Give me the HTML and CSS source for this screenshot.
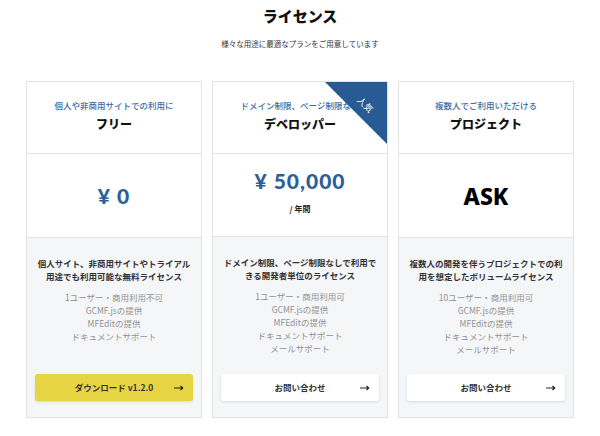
FILE: index.html
```html
<!DOCTYPE html>
<html lang="ja">
<head>
    <meta charset="UTF-8">
    <meta name="viewport" content="width=device-width, initial-scale=1.0">
    <title>ライセンス</title>
    <link rel="stylesheet" href="styles.css">
</head>
<body>

<section class="license">
    <h1>ライセンス</h1>
    <p class="lead">様々な用途に最適なプランをご用意しています</p>

    <div class="plans">
        <!-- フリー -->
        <div class="plan">
            <div class="plan-head">
                <p class="plan-target">個人や非商用サイトでの利用に</p>
                <p class="plan-name">フリー</p>
            </div>
            <div class="plan-price">
                <p class="price">¥ 0</p>
            </div>
            <div class="plan-body">
                <p class="plan-desc">個人サイト、非商用サイトやトライアル用途でも利用可能な無料ライセンス</p>
                <ul class="features">
                    <li>1ユーザー・商用利用不可</li>
                    <li>GCMF.jsの提供</li>
                    <li>MFEditの提供</li>
                    <li>ドキュメントサポート</li>
                </ul>
                <a class="btn btn-download" href="#">ダウンロード v1.2.0
                    <svg class="arrow" width="10" height="6" viewBox="0 0 10 6"><path d="M0 3h8.5M6.5 1l2.2 2-2.2 2" fill="none" stroke="currentColor" stroke-width="1.2"/></svg>
                </a>
            </div>
        </div>

        <!-- デベロッパー -->
        <div class="plan">
            <div class="ribbon"><span>人気</span></div>
            <div class="plan-head">
                <p class="plan-target">ドメイン制限、ページ制限なし</p>
                <p class="plan-name">デベロッパー</p>
            </div>
            <div class="plan-price price--yearly">
                <p class="price">¥ 50,000</p>
                <p class="price-unit">/ 年間</p>
            </div>
            <div class="plan-body">
                <p class="plan-desc">ドメイン制限、ページ制限なしで利用できる開発者単位のライセンス</p>
                <ul class="features">
                    <li>1ユーザー・商用利用可</li>
                    <li>GCMF.jsの提供</li>
                    <li>MFEditの提供</li>
                    <li>ドキュメントサポート</li>
                    <li>メールサポート</li>
                </ul>
                <a class="btn" href="#">お問い合わせ
                    <svg class="arrow" width="10" height="6" viewBox="0 0 10 6"><path d="M0 3h8.5M6.5 1l2.2 2-2.2 2" fill="none" stroke="currentColor" stroke-width="1.2"/></svg>
                </a>
            </div>
        </div>

        <!-- プロジェクト -->
        <div class="plan">
            <div class="plan-head">
                <p class="plan-target">複数人でご利用いただける</p>
                <p class="plan-name">プロジェクト</p>
            </div>
            <div class="plan-price">
                <p class="price price-ask">ASK</p>
            </div>
            <div class="plan-body">
                <p class="plan-desc">複数人の開発を伴うプロジェクトでの利用を想定したボリュームライセンス</p>
                <ul class="features">
                    <li>10ユーザー・商用利用可</li>
                    <li>GCMF.jsの提供</li>
                    <li>MFEditの提供</li>
                    <li>ドキュメントサポート</li>
                    <li>メールサポート</li>
                </ul>
                <a class="btn" href="#">お問い合わせ
                    <svg class="arrow" width="10" height="6" viewBox="0 0 10 6"><path d="M0 3h8.5M6.5 1l2.2 2-2.2 2" fill="none" stroke="currentColor" stroke-width="1.2"/></svg>
                </a>
            </div>
        </div>
    </div>
</section>

</body>
</html>
```

FILE: styles.css
```css
body {
    margin: 0;
    background-color: #fff;
    font-family: "Noto Sans CJK JP", "Noto Sans", sans-serif;
    color: #222;
}
p {
    margin: 0;
}
.license {
    padding-top: 6px;
    text-align: center;
}
h1 {
    margin: 0;
    font-size: 15px;
    line-height: 20px;
    font-weight: 900;
    color: #111;
}
.lead {
    margin-top: 12px;
    font-size: 7.5px;
    line-height: 12px;
    color: #333;
}
.plans {
    display: grid;
    grid-template-columns: repeat(3, 176px);
    gap: 10px;
    justify-content: center;
    margin-top: 31px;
}
.plan {
    position: relative;
    overflow: hidden;
    display: flex;
    flex-direction: column;
    border: 1px solid #e3e3e3;
    background: #f5f6f8;
}
.plan-head {
    padding: 16px 0 20px;
    background: #fff;
    border-bottom: 1px solid #e3e3e3;
    white-space: nowrap;
}
.plan-target {
    font-size: 8.5px;
    line-height: 14px;
    font-weight: 500;
    color: #3a6ba3;
}
.plan-name {
    margin-top: 3px;
    font-size: 12px;
    line-height: 18px;
    font-weight: 900;
    color: #111;
}
.plan-price {
    height: 83px;
    display: flex;
    flex-direction: column;
    justify-content: center;
    align-items: center;
    background: #fff;
    border-bottom: 1px solid #e3e3e3;
}
.price--yearly {
    box-sizing: border-box;
    padding-bottom: 8px;
}
.price {
    font-family: Lato, "Noto Sans", sans-serif;
    font-size: 21px;
    line-height: 26px;
    font-weight: 900;
    letter-spacing: 1px;
    color: #2b5f96;
}
.price-ask {
    font-family: "Noto Sans", sans-serif;
    font-size: 23px;
    font-weight: 800;
    letter-spacing: 0;
    color: #000;
}
.price-unit {
    margin-top: 9px;
    font-size: 8px;
    line-height: 12px;
    font-weight: 700;
    color: #222;
}
.plan-body {
    flex: 1;
    display: flex;
    flex-direction: column;
    padding: 19px 8px 16px;
}
.plan-desc {
    font-size: 8.5px;
    line-height: 12.6px;
    font-weight: 700;
    color: #333;
}
.features {
    list-style: none;
    margin: 9px 0 18px;
    padding: 0;
    font-size: 8.5px;
    line-height: 13px;
    color: #929292;
}
.btn {
    position: relative;
    display: block;
    margin-top: auto;
    height: 27px;
    line-height: 27px;
    border-radius: 3px;
    background: #fff;
    box-shadow: 0 1px 3px rgba(0, 0, 0, 0.12);
    font-size: 8.5px;
    font-weight: 700;
    color: #333;
    text-decoration: none;
}
.btn-download {
    background: #e6d443;
}
.btn .arrow {
    position: absolute;
    right: 9px;
    top: 11px;
    color: #222;
}
.ribbon {
    position: absolute;
    top: 0;
    right: 0;
    width: 62px;
    height: 62px;
    background: #285b93;
    clip-path: polygon(0 0, 100% 0, 100% 100%);
}
.ribbon span {
    position: absolute;
    left: 31px;
    top: 17px;
    font-size: 9px;
    line-height: 12px;
    color: #fff;
    transform: rotate(45deg);
}
```
